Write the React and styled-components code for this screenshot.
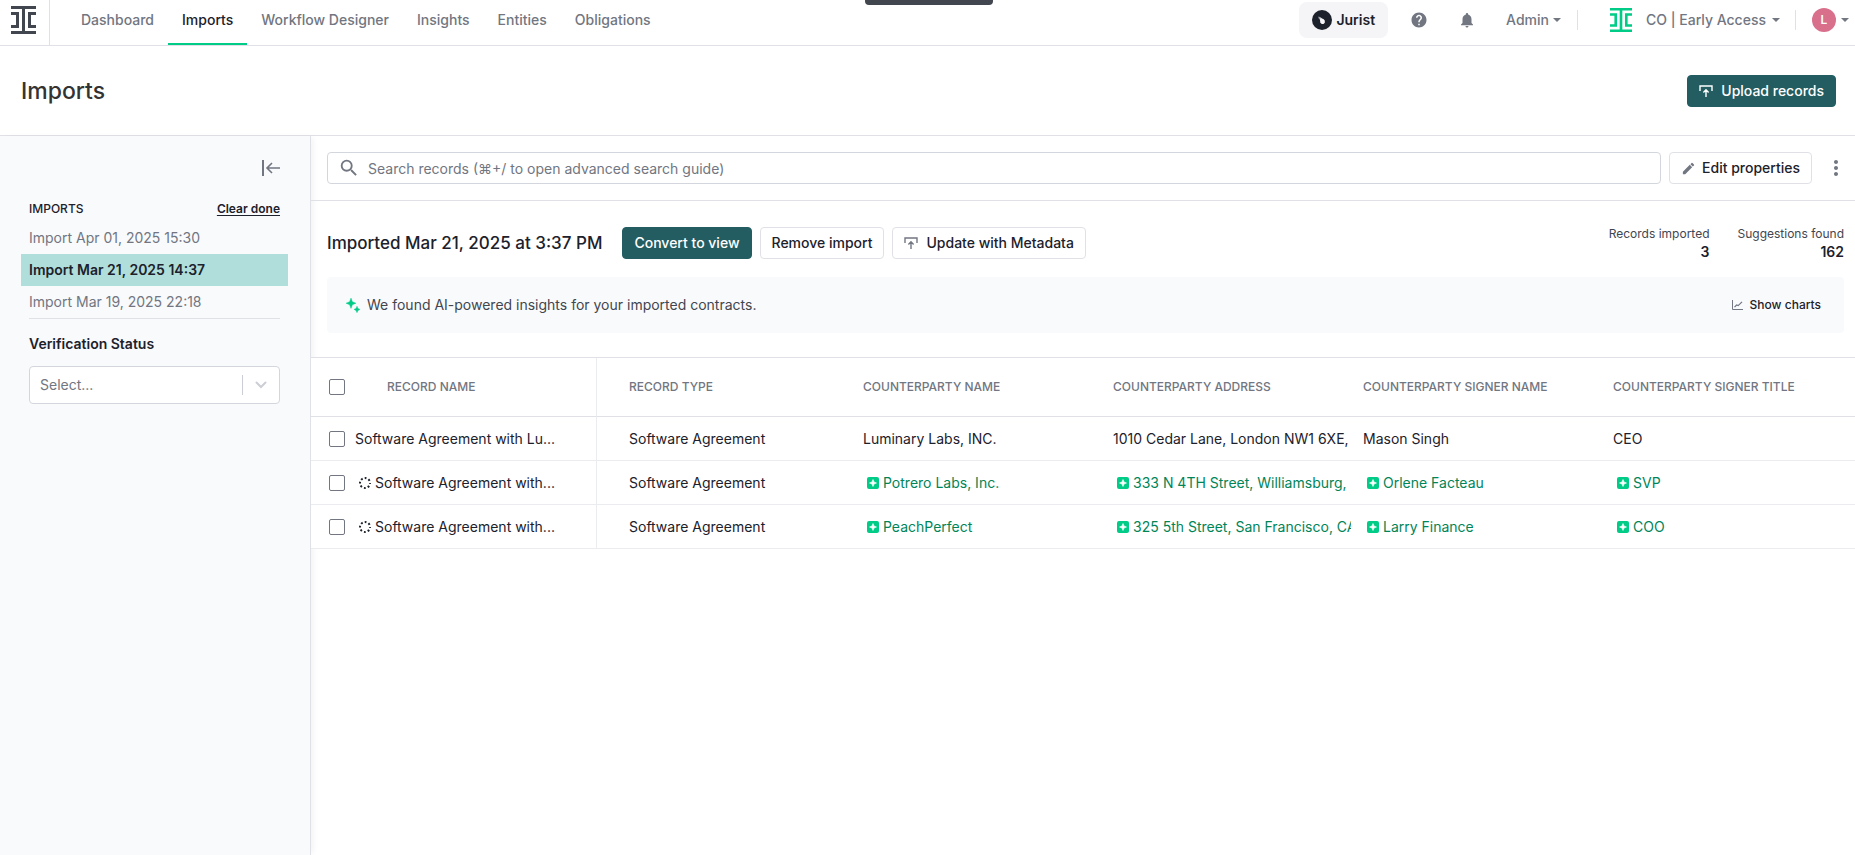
import React, { useState } from "react";
import styled, { createGlobalStyle } from "styled-components";
import { MdHelp, MdNotifications, MdEdit, MdMoreVert, MdSearch } from "react-icons/md";

const navItems = ["Dashboard", "Imports", "Workflow Designer", "Insights", "Entities", "Obligations"];

const imports = ["Import Apr 01, 2025 15:30", "Import Mar 21, 2025 14:37", "Import Mar 19, 2025 22:18"];

const columns = [
	"Record Type",
	"Counterparty Name",
	"Counterparty Address",
	"Counterparty Signer Name",
	"Counterparty Signer Title",
];

const records = [
	{
		name: "Software Agreement with Lu...",
		type: "Software Agreement",
		values: ["Luminary Labs, INC.", "1010 Cedar Lane, London NW1 6XE,", "Mason Singh", "CEO"],
	},
	{
		name: "Software Agreement with...",
		type: "Software Agreement",
		pending: true,
		values: ["Potrero Labs, Inc.", "333 N 4TH Street, Williamsburg,", "Orlene Facteau", "SVP"],
	},
	{
		name: "Software Agreement with...",
		type: "Software Agreement",
		pending: true,
		values: ["PeachPerfect", "325 5th Street, San Francisco, CA", "Larry Finance", "COO"],
	},
];

const LogoMark = ({ width, height, color }) => (
	<svg width={width} height={height} viewBox="0 0 25 28" fill={color} preserveAspectRatio="none" aria-hidden="true">
		<path d="M0 0h25v3H14v22h11v3H0v-3h11V3H0z" />
		<path d="M0 6h8v16H0v-3h5V9H0zM25 6h-8v16h8v-3h-5V9h5z" />
	</svg>
);

const Caret = () => (
	<svg width="8" height="4" viewBox="0 0 8 4" fill="currentColor" aria-hidden="true">
		<path d="M0 0h8L4 4z" />
	</svg>
);

const UploadIcon = () => (
	<svg width="14" height="12" viewBox="0 0 14 12" fill="none" stroke="currentColor" strokeWidth="1.4" aria-hidden="true">
		<path d="M1 6V1h12v5M7 12V5M4.4 7.4 7 4.8l2.6 2.6" />
	</svg>
);

const JuristIcon = () => (
	<svg width="20" height="20" viewBox="0 0 20 20" aria-hidden="true">
		<circle cx="10" cy="10" r="10" fill="#1c212b" />
		<path d="M7.5 8l1.2-.6L10 8.600l1.400.4 1.400 1.500v2.200l-1.300 1.400H9.800l-1.500-1.300-.2-2z" fill="#f5f5f8" />
		<path d="M6.300 6.600l2.400.6-.6 2.200-1.400-1z" fill="#a0a4ad" />
	</svg>
);

const CollapseIcon = () => (
	<svg width="18" height="16" viewBox="0 0 18 16" fill="none" stroke="currentColor" strokeWidth="2" aria-hidden="true">
		<path d="M1 0v16" />
		<path d="M18 8H5M10 3 5 8l5 5" strokeWidth="1.6" />
	</svg>
);

const SparkleIcon = () => (
	<svg width="14" height="15" viewBox="0 0 14 15" fill="#00cc88" aria-hidden="true">
		<path d="M5 0l1.400 3.700L10 5.200 6.400 6.700 5 10.400 3.600 6.700 0 5.200l3.600-1.500zM11 8.200l1 2.200 2 1-2 1-1 2.300-1-2.300-2-1 2-1z" stroke="#00cc88" strokeWidth=".4" />
	</svg>
);

const ChartIcon = () => (
	<svg width="11" height="10" viewBox="0 0 11 10" fill="none" stroke="currentColor" aria-hidden="true">
		<path d="M.5 0v9.500H11" />
		<path d="M2.500 7.200 4.600 5l1.600.6L10 1.800" strokeWidth="1.2" />
	</svg>
);

const ChevronIcon = () => (
	<svg width="12" height="8" viewBox="0 0 12 8" fill="none" stroke="#ccced5" strokeWidth="2" aria-hidden="true">
		<path d="M1.500 1.500 6 6l4.500-4.500" strokeLinecap="round" />
	</svg>
);

const PendingIcon = () => (
	<svg width="12" height="12" viewBox="0 0 12 12" aria-hidden="true">
		<circle cx="6" cy="6" r="5" fill="none" stroke="#1c212b" strokeWidth="2" strokeDasharray="1.8 2.127" strokeDashoffset="0.9" />
	</svg>
);

const PlusIcon = () => (
	<svg width="12" height="12" viewBox="0 0 12 12" aria-hidden="true">
		<rect width="12" height="12" rx="2" fill="#00cc88" />
		<path d="M6 2.500l1 2.500 2.500 1L7 7 6 9.500 5 7 2.500 6 5 5z" fill="#fff" stroke="#fff" strokeWidth=".6" />
	</svg>
);

const App = () => {
	const [selectedImport, setSelectedImport] = useState(1);

	return (
		<>
			<GlobalStyle />
			<TopHandle />
			<Page>
				<TopBar>
					<Brand href="#" aria-label="Home">
						<LogoMark width={25} height={28} color="#42464f" />
					</Brand>
					<Nav>
						{navItems.map((item) => (
							<NavLink key={item} href="#" $active={item === "Imports"}>
								{item}
							</NavLink>
						))}
					</Nav>
					<Tools>
						<JuristButton>
							<JuristIcon />
							Jurist
						</JuristButton>
						<ToolButton aria-label="Help">
							<MdHelp size={18} />
						</ToolButton>
						<ToolButton aria-label="Notifications">
							<MdNotifications size={18} />
						</ToolButton>
						<ToolButton>
							Admin
							<Caret />
						</ToolButton>
					</Tools>
					<Workspace>
						<LogoMark width={22} height={24} color="#00cc88" />
						<ToolButton $gap="6px">
							CO | Early Access
							<Caret />
						</ToolButton>
					</Workspace>
					<Account aria-label="Account">
						<Avatar>L</Avatar>
						<Caret />
					</Account>
				</TopBar>

				<PageHeader>
					<PageTitle>Imports</PageTitle>
					<Button $primary>
						<UploadIcon />
						Upload records
					</Button>
				</PageHeader>

				<Body>
					<Sidebar>
						<CollapseButton aria-label="Collapse sidebar">
							<CollapseIcon />
						</CollapseButton>
						<SidebarHead>
							<h2>IMPORTS</h2>
							<a href="#">Clear done</a>
						</SidebarHead>
						<ImportList>
							{imports.map((item, i) => (
								<li key={item}>
									<ImportItem $active={i === selectedImport} onClick={() => setSelectedImport(i)}>
										{item}
									</ImportItem>
								</li>
							))}
						</ImportList>
						<FilterLabel htmlFor="status">Verification Status</FilterLabel>
						<SelectBox>
							<select id="status" defaultValue="">
								<option value="">Select...</option>
								<option>Verified</option>
								<option>Unverified</option>
							</select>
							<SelectArrow>
								<ChevronIcon />
							</SelectArrow>
						</SelectBox>
					</Sidebar>

					<Main>
						<SearchBar>
							<SearchField>
								<MdSearch size={22} />
								<input
									type="text"
									aria-label="Search records"
									placeholder="Search records (⌘+/ to open advanced search guide)"
								/>
							</SearchField>
							<Button $gap="6px">
								<MdEdit size={15} />
								Edit properties
							</Button>
							<MoreButton aria-label="More options">
								<MdMoreVert size={24} />
							</MoreButton>
						</SearchBar>

						<Summary>
							<SummaryTitle>Imported Mar 21, 2025 at 3:37 PM</SummaryTitle>
							<Actions>
								<Button $primary>Convert to view</Button>
								<Button>Remove import</Button>
								<Button>
									<UploadIcon />
									Update with Metadata
								</Button>
							</Actions>
							<Stats>
								<Stat>
									<dt>Records imported</dt>
									<dd>3</dd>
								</Stat>
								<Stat>
									<dt>Suggestions found</dt>
									<dd>162</dd>
								</Stat>
							</Stats>
						</Summary>

						<Banner>
							<SparkleIcon />
							<p>We found AI-powered insights for your imported contracts.</p>
							<ChartsButton>
								<ChartIcon />
								Show charts
							</ChartsButton>
						</Banner>

						<Table>
							<colgroup>
								<col width="286" />
								<col width="250" />
								<col width="250" />
								<col width="250" />
								<col width="250" />
								<col />
							</colgroup>
							<thead>
								<tr>
									<th>
										<NameCell $gap="42px">
											<Checkbox type="checkbox" aria-label="Select all records" />
											Record Name
										</NameCell>
									</th>
									{columns.map((column) => (
										<th key={column}>{column}</th>
									))}
								</tr>
							</thead>
							<tbody>
								{records.map((record, i) => (
									<tr key={i}>
										<td>
											<NameCell $gap="10px">
												<Checkbox type="checkbox" aria-label={`Select record ${i + 1}`} />
												<CellValue $pending={record.pending}>
													{record.pending && <PendingIcon />}
													{record.name}
												</CellValue>
											</NameCell>
										</td>
										<td>{record.type}</td>
										{record.values.map((value) => (
											<td key={value}>
												<CellValue $pending={record.pending} $suggested={record.pending}>
													{record.pending && <PlusIcon />}
													{value}
												</CellValue>
											</td>
										))}
									</tr>
								))}
							</tbody>
						</Table>
					</Main>
				</Body>
			</Page>
		</>
	);
};

const GlobalStyle = createGlobalStyle`
	* {
		box-sizing: border-box;
	}
	body {
		margin: 0;
		background: #fff;
		color: #1c212b;
		font-family: Inter, "Liberation Sans", sans-serif;
		font-size: 14px;
		line-height: 20px;
	}
	h1, h2, p, ul, dl, dd {
		margin: 0;
		padding: 0;
	}
	button, input, select {
		font: inherit;
		color: inherit;
	}
	button {
		border: 0;
		background: none;
		padding: 0;
		cursor: pointer;
		white-space: nowrap;
	}
	svg {
		flex-shrink: 0;
	}
`;

/* pull-down tab that hangs over the top edge of the window */
const TopHandle = styled.div`
	position: absolute;
	top: 0;
	left: 50%;
	width: 128px;
	height: 5px;
	margin-left: -63px;
	border-radius: 0 0 4px 4px;
	background: #42464f;
`;

const Page = styled.div`
	display: flex;
	flex-direction: column;
	min-height: 100vh;
`;

const TopBar = styled.header`
	display: flex;
	height: 46px;
	border-bottom: 1px solid #e0e1e6;
	color: #717681;
	font-weight: 500;
`;

const Brand = styled.a`
	display: flex;
	width: 50px;
	padding: 6px 0 0 11px;
	border-right: 1px solid #e0e1e6;
`;

const Nav = styled.nav`
	display: flex;
	flex: 1;
	padding-left: 17px;
`;

const NavLink = styled.a`
	padding: 10px 14px 0;
	border-bottom: 2px solid ${({ $active }) => ($active ? "#00cc88" : "transparent")};
	color: ${({ $active }) => ($active ? "#1c212b" : "#717681")};
	text-decoration: none;
	white-space: nowrap;
`;

const Tools = styled.div`
	display: flex;
	align-items: center;
	align-self: flex-start;
	gap: 30px;
	height: 40px;
	padding-right: 16px;
`;

const ToolButton = styled.button`
	display: flex;
	align-items: center;
	gap: ${({ $gap }) => $gap || "4px"};
`;

const JuristButton = styled.button`
	display: flex;
	align-items: center;
	gap: 4px;
	height: 36px;
	margin-right: -8px;
	padding: 0 13px;
	border-radius: 8px;
	background: #f5f5f8;
	color: #1c212b;
	font-weight: 600;
`;

const Workspace = styled.div`
	display: flex;
	align-items: center;
	gap: 14px;
	height: 20px;
	margin-top: 10px;
	padding: 0 15px 0 32px;
	border: solid #e0e1e6;
	border-width: 0 1px;
`;

const Account = styled.button`
	display: flex;
	align-items: center;
	gap: 5px;
	height: 40px;
	padding: 0 6px 0 16px;
`;

const Avatar = styled.span`
	width: 24px;
	height: 24px;
	border-radius: 50%;
	background: #d8708c;
	color: #fff;
	font-size: 12px;
	font-weight: 600;
	line-height: 24px;
	text-align: center;
`;

const PageHeader = styled.div`
	display: flex;
	align-items: center;
	justify-content: space-between;
	height: 90px;
	padding: 0 19px 0 21px;
	border-bottom: 1px solid #e0e1e6;
`;

const PageTitle = styled.h1`
	color: #333;
	font-size: 23px;
	font-weight: 500;
	line-height: 32px;
`;

const Button = styled.button`
	display: flex;
	align-items: center;
	gap: ${({ $gap }) => $gap || "8px"};
	height: 32px;
	padding: 0 11px;
	border: 1px solid ${({ $primary }) => ($primary ? "#235d62" : "#e0e1e6")};
	border-radius: 4px;
	background: ${({ $primary }) => ($primary ? "#235d62" : "#fff")};
	color: ${({ $primary }) => ($primary ? "#fff" : "#1c212b")};
	font-weight: 500;

	svg {
		color: ${({ $primary }) => ($primary ? "#fff" : "#717681")};
	}
`;

const Body = styled.div`
	display: flex;
	flex: 1;
`;

const Sidebar = styled.aside`
	width: 311px;
	flex-shrink: 0;
	padding: 24px 30px 0 29px;
	border-right: 1px solid #e0e1e6;
	background: #f9fafc;
	box-shadow: 4px 0 6px -2px rgba(28, 33, 43, 0.06);
`;

const CollapseButton = styled.button`
	display: flex;
	margin-left: auto;
	color: #717681;
`;

const SidebarHead = styled.div`
	display: flex;
	justify-content: space-between;
	margin-top: 23px;
	font-size: 12px;

	h2 {
		font-size: 12px;
		font-weight: 500;
	}
	a {
		color: inherit;
		font-weight: 600;
		text-underline-offset: 2px;
	}
`;

const ImportList = styled.ul`
	margin-top: 3px;
	border-bottom: 1px solid #e0e1e6;
	list-style: none;
`;

const ImportItem = styled.button`
	width: calc(100% + 16px);
	height: 32px;
	margin: 0 -8px;
	padding: 0 8px;
	background: ${({ $active }) => ($active ? "#b0deda" : "none")};
	color: ${({ $active }) => ($active ? "#1c212b" : "#717681")};
	font-weight: ${({ $active }) => ($active ? 600 : 400)};
	text-align: left;
	vertical-align: top;
`;

const FilterLabel = styled.label`
	display: block;
	margin-top: 15px;
	font-weight: 600;
`;

const SelectBox = styled.div`
	display: flex;
	align-items: center;
	height: 38px;
	margin-top: 12px;
	border: 1px solid #d4d6dd;
	border-radius: 4px;
	background: #fff;

	select {
		flex: 1;
		height: 100%;
		padding: 0 10px;
		border: 0;
		appearance: none;
		background: none;
		color: #717681;
	}
`;

const SelectArrow = styled.span`
	display: flex;
	align-items: center;
	justify-content: center;
	width: 37px;
	height: 20px;
	border-left: 1px solid #ccced5;
`;

const Main = styled.main`
	flex: 1;
	min-width: 0;
`;

const SearchBar = styled.div`
	display: flex;
	gap: 8px;
	padding: 16px 3px 16px 16px;
	border-bottom: 1px solid #e0e1e6;
`;

const SearchField = styled.div`
	display: flex;
	align-items: center;
	flex: 1;
	gap: 8px;
	padding-left: 10px;
	border: 1px solid #d4d6dd;
	border-radius: 4px;
	color: #717681;

	input {
		flex: 1;
		height: 30px;
		padding: 0;
		border: 0;
		outline: 0;
		background: none;
	}
	input::placeholder {
		color: #717681;
		opacity: 1;
	}
`;

const MoreButton = styled.button`
	display: flex;
	align-items: center;
	justify-content: center;
	width: 32px;
	height: 32px;
	color: #717681;
`;

const Summary = styled.div`
	display: flex;
	align-items: center;
	height: 76px;
	padding: 8px 11px 0 16px;
`;

const SummaryTitle = styled.h2`
	font-size: 17px;
	font-weight: 500;
	line-height: 24px;
	white-space: nowrap;
`;

const Actions = styled.div`
	display: flex;
	gap: 8px;
	margin-left: 20px;
`;

const Stats = styled.dl`
	display: flex;
	gap: 28px;
	margin-left: auto;
`;

const Stat = styled.div`
	color: #42464f;
	font-size: 12px;
	line-height: 18px;
	text-align: right;
	white-space: nowrap;

	dd {
		color: #1c212b;
		font-size: 14px;
		font-weight: 600;
	}
`;

const Banner = styled.section`
	display: flex;
	align-items: center;
	gap: 7px;
	height: 56px;
	margin: 0 11px 24px 16px;
	padding: 0 23px 0 19px;
	border-radius: 4px;
	background: #f9fafc;
	color: #42464f;
`;

const ChartsButton = styled.button`
	display: flex;
	align-items: center;
	gap: 7px;
	margin-left: auto;
	color: #1c212b;
	font-size: 12px;
	font-weight: 500;

	svg {
		color: #717681;
	}
`;

const Table = styled.table`
	width: 100%;
	border-top: 1px solid #e0e1e6;
	border-spacing: 0;
	background: #fff;
	table-layout: fixed;

	th,
	td {
		height: 44px;
		padding: 0 0 0 16px;
		border-bottom: 1px solid #ebecf0;
		text-align: left;
		white-space: nowrap;
	}
	th {
		height: 59px;
		border-bottom-color: #e0e1e6;
		color: #717681;
		font-size: 12px;
		font-weight: 500;
		text-transform: uppercase;
	}
	th:first-child,
	td:first-child {
		padding-left: 18px;
		border-right: 1px solid #ebecf0;
	}
	th:nth-child(2),
	td:nth-child(2) {
		padding-left: 32px;
	}
`;

const NameCell = styled.div`
	display: flex;
	align-items: center;
	gap: ${({ $gap }) => $gap};
`;

const CellValue = styled.span`
	display: flex;
	align-items: center;
	gap: 4px;
	padding-left: ${({ $pending }) => ($pending ? "4px" : 0)};
	color: ${({ $suggested }) => ($suggested ? "#008558" : "inherit")};
	overflow: clip;
	overflow-clip-margin: 4px;
`;

const Checkbox = styled.input`
	width: 16px;
	height: 16px;
	margin: 0;
	border: 1px solid #717681;
	border-radius: 2px;
	appearance: none;
	background: #fff;

	&:checked {
		background: #235d62;
	}
`;

export default App;
